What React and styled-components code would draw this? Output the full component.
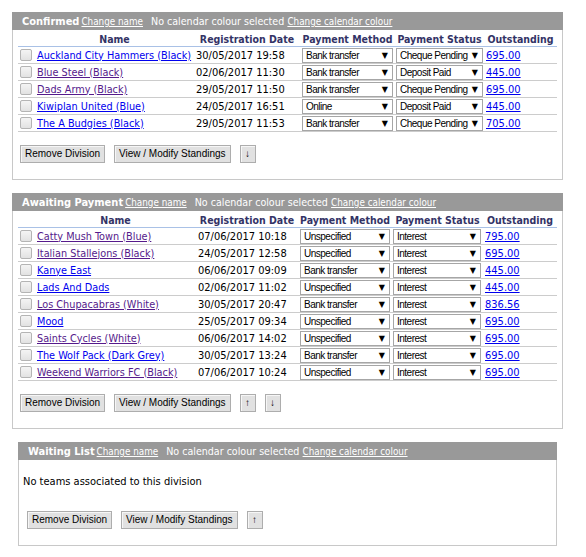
import React from "react";
import styled, { createGlobalStyle } from "styled-components";

const GlobalStyle = createGlobalStyle`
  html, body { margin: 0; padding: 0; background: #fff; }
  body { font-family: "DejaVu Sans Condensed", "DejaVu Sans", Tahoma, sans-serif; font-size: 11px; color: #000; }
`;

const Page = styled.div`
  padding: 12px 0 0 12px;
  width: 551px;
`;

const Panel = styled.section`
  border: 1px solid #c8c8c8;
  border-top: none;
  margin: 0 ${(p) => p.$inset || 0}px 13px ${(p) => p.$inset || 0}px;
  background: #fff;
`;

const PanelHeader = styled.div`
  background: #999999;
  color: #fff;
  height: 18px;
  line-height: 18px;
  padding-left: 10px;
  margin: 0 -1px;
  white-space: nowrap;
  font-size: 11px;
`;

const Title = styled.b`
  font-weight: bold;
`;

const HeaderLink = styled.a`
  color: #fff;
  font-size: 9.8px;
  text-decoration: underline;
  margin-left: ${(p) => (p.$tight ? 0 : 2)}px;
  cursor: pointer;
`;

const Note = styled.span`
  font-size: 10.6px;
  margin-left: 8px;
`;

const Table = styled.table`
  border-collapse: collapse;
  table-layout: fixed;
  width: 539px;
  margin: 0 0 0 5px;
`;

const Th = styled.th`
  color: #333366;
  font-weight: bold;
  font-size: 10.5px;
  text-align: center;
  height: 14px;
  padding: 2px 0 0;
  line-height: 13px;
  border-bottom: 1px solid #a9c1e6;
  white-space: nowrap;
`;

const Tr = styled.tr`
  border-bottom: 1px solid #cccccc;
`;

const Td = styled.td`
  height: 16px;
  padding: 0 0 0 ${(p) => (p.$flush ? 0 : 2)}px;
  white-space: nowrap;
  vertical-align: middle;
`;

const Check = styled.input.attrs({ type: "checkbox" })`
  appearance: none;
  display: block;
  width: 12px;
  height: 12px;
  margin: 0 0 0 2px;
  border: 1px solid #b4b4b4;
  border-radius: 2px;
  background: linear-gradient(#f4f4f4, #e2e2e2);
  box-sizing: border-box;
`;

const TeamLink = styled.a`
  color: ${(p) => (p.$visited ? "#551a8b" : "#0000ee")};
  font-size: 10.8px;
  text-decoration: underline;
  cursor: pointer;
`;

const MoneyLink = styled.a`
  color: #0000ee;
  text-decoration: underline;
  cursor: pointer;
`;

const SelectWrap = styled.span`
  position: relative;
  display: block;
  width: ${(p) => p.$w}px;
  height: 15px;
  margin-left: ${(p) => p.$ml || 0}px;
`;

const Select = styled.select`
  appearance: none;
  width: 100%;
  height: 15px;
  box-sizing: border-box;
  border: 1px solid #a6a6a6;
  border-radius: 0;
  background: #fff;
  font-family: "Liberation Sans", Arial, sans-serif;
  font-size: 10px;
  letter-spacing: -0.5px;
  color: #000;
  padding: 0 0 0 3px;
  margin: 0;
  line-height: 13px;
  outline: none;
`;

const Arrow = styled.span`
  position: absolute;
  right: 5px;
  top: 1px;
  font-size: 8px;
  line-height: 13px;
  pointer-events: none;
  font-family: "DejaVu Sans", sans-serif;
`;

const Actions = styled.div`
  display: flex;
  gap: 9px;
  padding: ${(p) => p.$pad || "13px 0 16px 7px"};
`;

const Button = styled.button`
  font-family: "Liberation Sans", Arial, sans-serif;
  font-size: 10px;
  color: #000;
  height: 18px;
  padding: 0 4px;
  background: #e1e1e1;
  border: 1px solid #adadad;
  border-radius: 0;
  box-shadow: inset 1px 1px 0 #f6f6f6;
  line-height: 16px;
  min-width: 16px;
`;

const Empty = styled.p`
  margin: 0;
  padding: 15px 0 0 4px;
  font-size: 11px;
  line-height: 13px;
`;

function Dropdown({ value, w, ml }) {
  return (
    <SelectWrap $w={w} $ml={ml}>
      <Select defaultValue={value}>
        <option>{value}</option>
      </Select>
      <Arrow>▼</Arrow>
    </SelectWrap>
  );
}

function Header({ title }) {
  return (
    <PanelHeader>
      <Title>{title}</Title>
      <HeaderLink>Change name</HeaderLink>
      <Note>No calendar colour selected</Note> <HeaderLink $tight>Change calendar colour</HeaderLink>
    </PanelHeader>
  );
}

function TeamTable({ cols, rows, widths }) {
  return (
    <Table>
      <colgroup>
        {cols.map((c, i) => (
          <col key={i} style={{ width: c }} />
        ))}
      </colgroup>
      <thead>
        <tr>
          <Th />
          <Th>Name</Th>
          <Th>Registration Date</Th>
          <Th>Payment Method</Th>
          <Th>Payment Status</Th>
          <Th>Outstanding</Th>
        </tr>
      </thead>
      <tbody>
        {rows.map((r) => (
          <Tr key={r.name}>
            <Td $flush>
              <Check />
            </Td>
            <Td>
              <TeamLink $visited={r.v}>{r.name}</TeamLink>
            </Td>
            <Td>{r.date}</Td>
            <Td $flush>
              <Dropdown value={r.method} w={widths[0]} ml={2} />
            </Td>
            <Td $flush>
              <Dropdown value={r.status} w={widths[1]} ml={1} />
            </Td>
            <Td>
              <MoneyLink>{r.out}</MoneyLink>
            </Td>
          </Tr>
        ))}
      </tbody>
    </Table>
  );
}

const confirmed = [
  { name: "Auckland City Hammers (Black)", v: false, date: "30/05/2017 19:58", method: "Bank transfer", status: "Cheque Pending", out: "695.00" },
  { name: "Blue Steel (Black)", v: true, date: "02/06/2017 11:30", method: "Bank transfer", status: "Deposit Paid", out: "445.00" },
  { name: "Dads Army (Black)", v: true, date: "29/05/2017 11:50", method: "Bank transfer", status: "Cheque Pending", out: "695.00" },
  { name: "Kiwiplan United (Blue)", v: false, date: "24/05/2017 16:51", method: "Online", status: "Deposit Paid", out: "445.00" },
  { name: "The A Budgies (Black)", v: false, date: "29/05/2017 11:53", method: "Bank transfer", status: "Cheque Pending", out: "705.00" },
];

const awaiting = [
  { name: "Catty Mush Town (Blue)", v: true, date: "07/06/2017 10:18", method: "Unspecified", status: "Interest", out: "795.00" },
  { name: "Italian Stallejons (Black)", v: true, date: "24/05/2017 12:58", method: "Unspecified", status: "Interest", out: "695.00" },
  { name: "Kanye East", v: false, date: "06/06/2017 09:09", method: "Bank transfer", status: "Interest", out: "445.00" },
  { name: "Lads And Dads", v: false, date: "02/06/2017 11:02", method: "Unspecified", status: "Interest", out: "445.00" },
  { name: "Los Chupacabras (White)", v: true, date: "30/05/2017 20:47", method: "Bank transfer", status: "Interest", out: "836.56" },
  { name: "Mood", v: false, date: "25/05/2017 09:34", method: "Unspecified", status: "Interest", out: "695.00" },
  { name: "Saints Cycles (White)", v: true, date: "06/06/2017 14:02", method: "Unspecified", status: "Interest", out: "695.00" },
  { name: "The Wolf Pack (Dark Grey)", v: false, date: "30/05/2017 13:24", method: "Bank transfer", status: "Interest", out: "695.00" },
  { name: "Weekend Warriors FC (Black)", v: true, date: "07/06/2017 10:24", method: "Unspecified", status: "Interest", out: "695.00" },
];

export default function App() {
  return (
    <>
      <GlobalStyle />
      <Page>
        <Panel>
          <Header title="Confirmed" />
          <TeamTable cols={[17, 159, 106, 95, 89, 73]} rows={confirmed} widths={[91, 87]} />
          <Actions>
            <Button>Remove Division</Button>
            <Button>View / Modify Standings</Button>
            <Button>↓</Button>
          </Actions>
        </Panel>
        <Panel>
          <Header title="Awaiting Payment" />
          <TeamTable cols={[17, 161, 102, 94, 91, 74]} rows={awaiting} widths={[90, 88]} />
          <Actions>
            <Button>Remove Division</Button>
            <Button>View / Modify Standings</Button>
            <Button>↑</Button>
            <Button>↓</Button>
          </Actions>
        </Panel>
        <Panel $inset={6}>
          <Header title="Waiting List" />
          <Empty>No teams associated to this division</Empty>
          <Actions $pad="23px 0 16px 8px">
            <Button>Remove Division</Button>
            <Button>View / Modify Standings</Button>
            <Button>↑</Button>
          </Actions>
        </Panel>
      </Page>
    </>
  );
}
